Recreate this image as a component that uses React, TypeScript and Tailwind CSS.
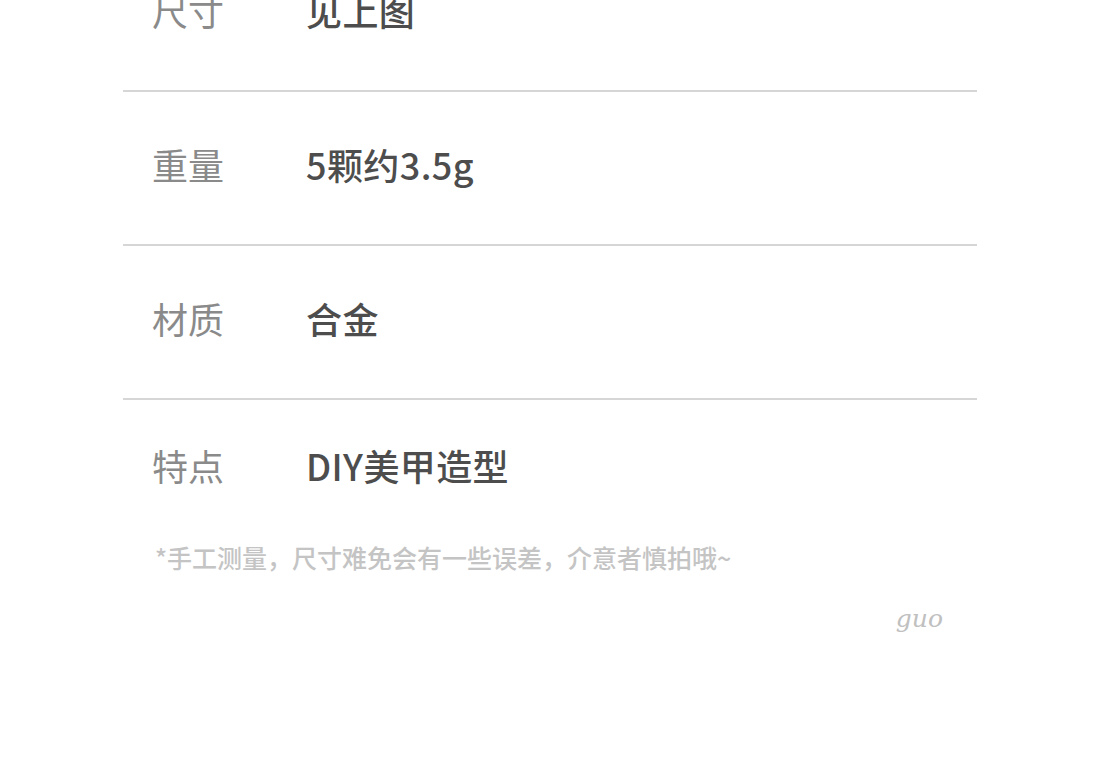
import React from 'react'

const rows = [
  { label: '尺寸', value: '见上图' },
  { label: '重量', value: '5颗约3.5g' },
  { label: '材质', value: '合金' },
  { label: '特点', value: 'DIY美甲造型' },
]

const font = { fontFamily: '"Noto Sans CJK SC", "Noto Sans", sans-serif' }

export default function App() {
  return (
    <div className="min-h-screen w-full bg-white overflow-hidden" style={font}>
      <div className="mx-auto w-[854px] -mt-[62px]">
        {rows.map((row, i) => (
          <div
            key={row.label}
            className={
              i < rows.length - 1
                ? 'flex h-[154px] items-center border-b-2 border-[#d6d6d6] px-[29px] pb-[8px]'
                : 'flex h-[140px] items-center px-[29px] pb-[10px]'
            }
          >
            <span className="w-[154px] text-[36px] leading-none text-[#8a8a8a]">{row.label}</span>
            <span className="text-[36px] leading-none font-medium text-[#4d4d4d] tracking-[0.4px]">{row.value}</span>
          </div>
        ))}

        <p className="mt-[5px] px-[32px] text-[25px] leading-none font-medium text-[#c4c4c4]">
          *手工测量，尺寸难免会有一些误差，介意者慎拍哦~
        </p>

        <div className="mt-[36px] flex justify-end pr-[34px]">
          <span className="text-[25px] italic font-light leading-none text-[#c0c0c0]" style={{ fontFamily: '"DejaVu Serif", serif' }}>
            guo
          </span>
        </div>
      </div>
    </div>
  )
}
